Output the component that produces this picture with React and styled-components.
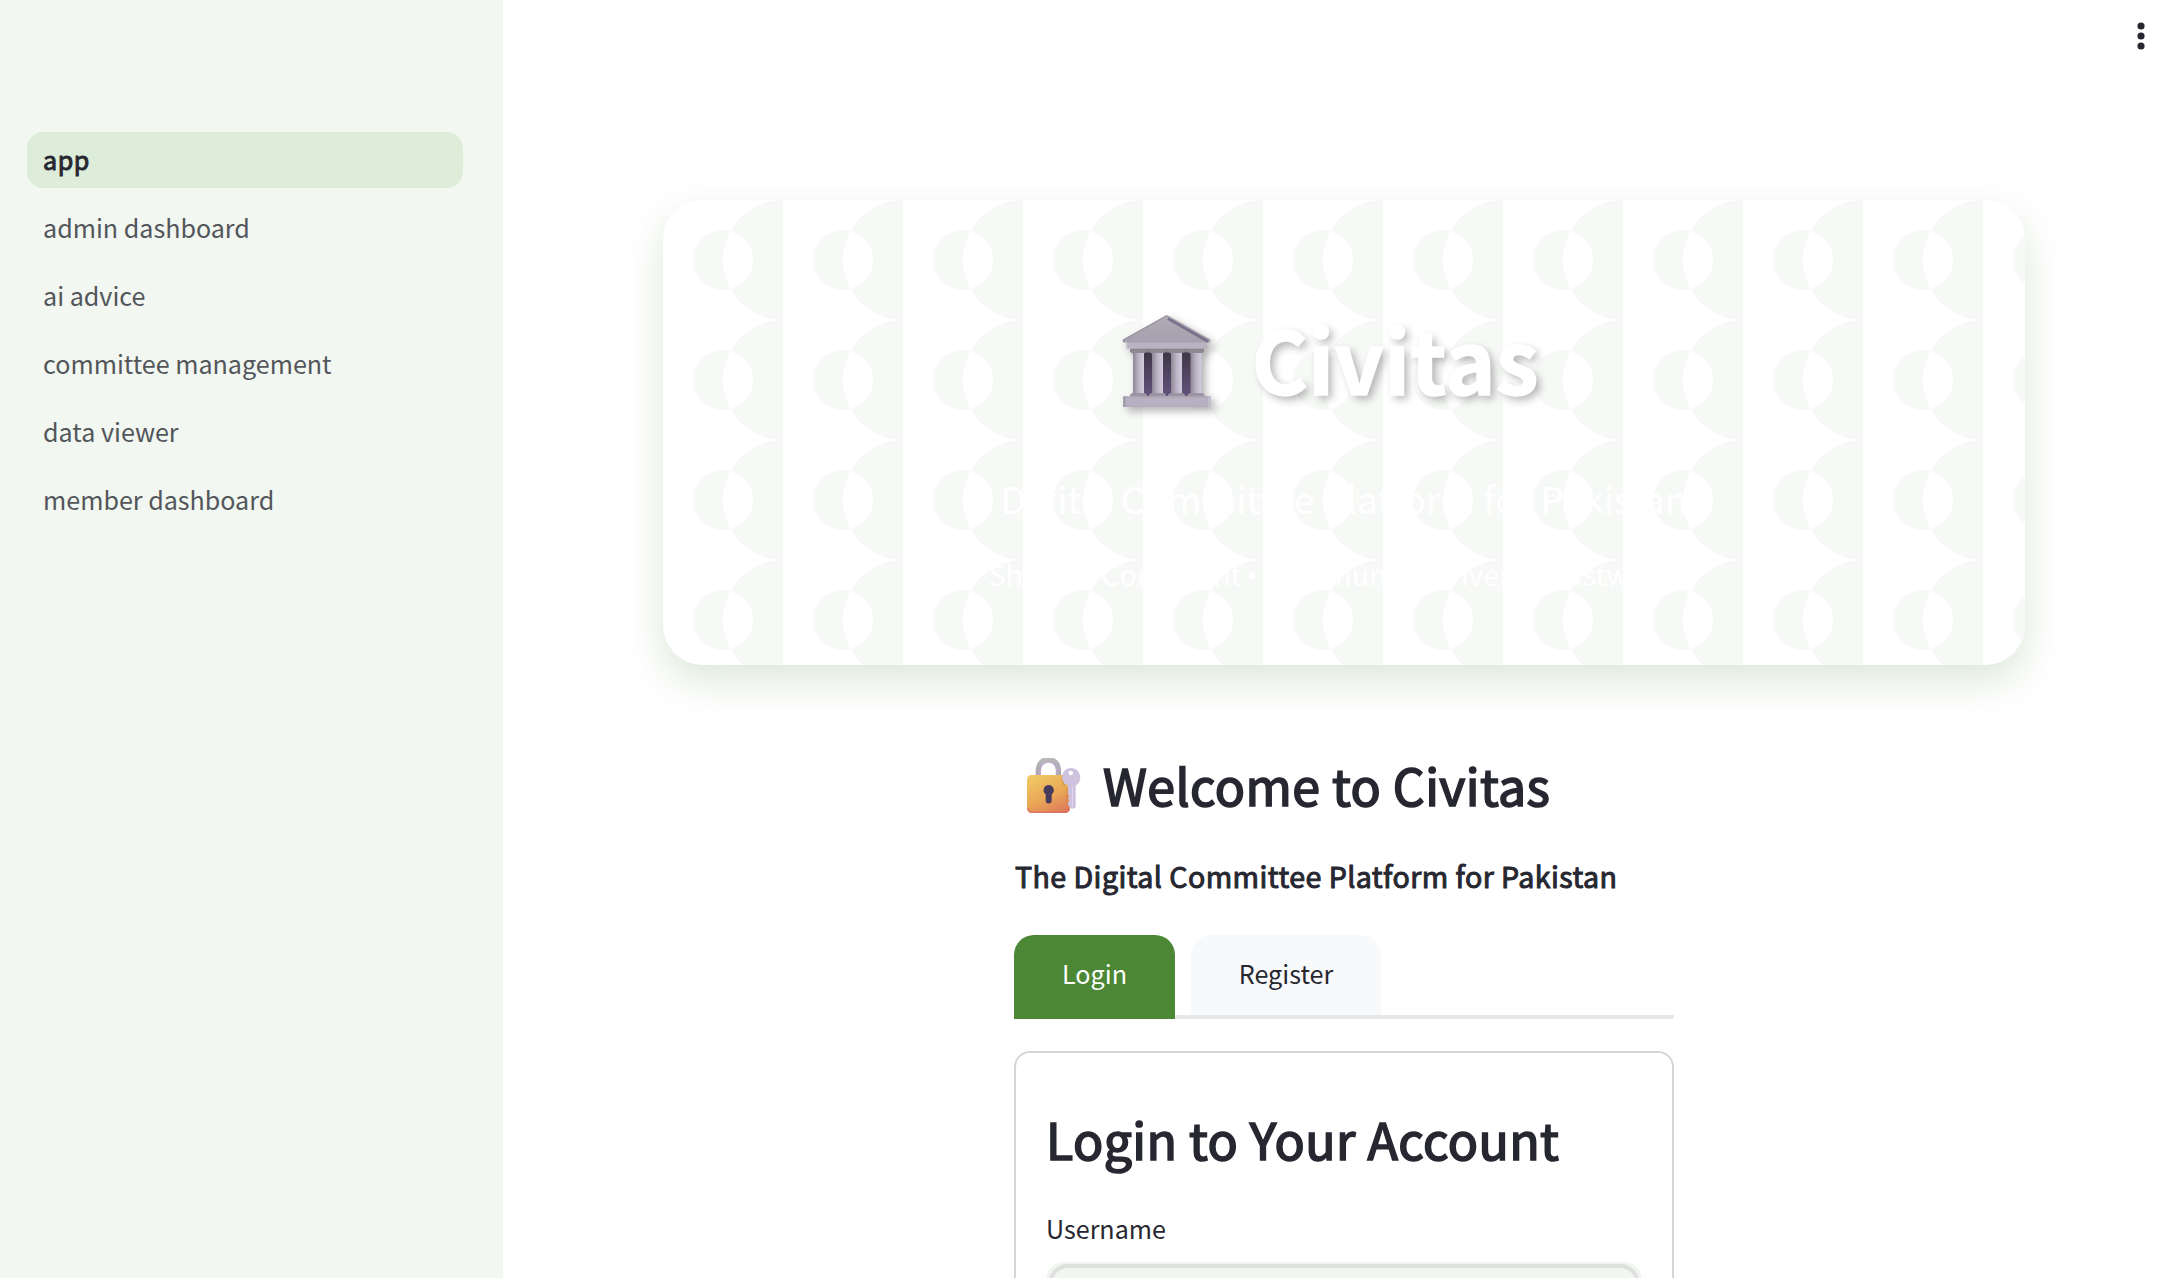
import React from "react";
import styled, { createGlobalStyle, css } from "styled-components";

const GlobalStyle = createGlobalStyle`
  * { box-sizing: border-box; }
  html, body { margin: 0; background: #ffffff; overflow: hidden; }
  body {
    font-family: "Source Sans Pro", "Noto Sans CJK SC", sans-serif;
    color: #262730;
    -webkit-font-smoothing: antialiased;
  }
  h1, h2, h3, p { margin: 0; }
`;

const Page = styled.div`
  display: flex;
  height: 1278px;
  overflow: hidden;
`;

const Sidebar = styled.nav`
  flex: 0 0 503px;
  padding: 132px 40px 0 27px;
  background: #f2f7f1;
  display: flex;
  flex-direction: column;
  gap: 12px;
`;

const NavLink = styled.a`
  display: flex;
  align-items: center;
  height: 56px;
  padding: 0 16px 2px;
  border-radius: 16px;
  font-size: 25.1px;
  line-height: 40px;
  color: #53565b;
  ${(p) =>
    p.$active &&
    css`
      background: #ddedda;
      color: #262730;
      -webkit-text-stroke: 0.9px #262730;
      letter-spacing: 0.5px;
    `}
`;

const Main = styled.main`
  flex: 1;
  min-width: 0;
  display: flex;
  flex-direction: column;
`;

const Toolbar = styled.header`
  flex: 0 0 120px;
  display: flex;
  justify-content: flex-end;
  align-items: flex-start;
  padding: 20px 23px 0 0;
`;

const Content = styled.div`
  padding: 80px 147px 0 160px;
  display: flex;
  flex-direction: column;
  align-items: center;
`;

const Hero = styled.section`
  position: relative;
  width: 100%;
  height: 465px;
  flex: none;
  padding-top: 100px;
  border-radius: 40px;
  background: #ffffff;
  box-shadow: 0 16px 38px rgba(74, 135, 52, 0.19);
  display: flex;
  flex-direction: column;
  align-items: center;
  color: #ffffff;
`;

const HeroPattern = styled.svg`
  position: absolute;
  inset: 0;
  width: 100%;
  height: 100%;
  border-radius: 40px;
`;

const HeroTitle = styled.h1`
  position: relative;
  display: flex;
  align-items: center;
  gap: 40px;
  height: 116px;
  padding-right: 26px;
  font-size: 86.4px;
  font-weight: 700;
  line-height: 116px;
  -webkit-text-stroke: 1.4px #ffffff;
  text-shadow: 4px 4px 8px rgba(0, 0, 0, 0.3);
  svg {
    margin-top: 5px;
    overflow: visible;
    filter: drop-shadow(4px 4px 4px rgba(0, 0, 0, 0.3));
  }
`;

const HeroLead = styled.p`
  position: relative;
  margin-top: 52px;
  font-size: 37.3px;
  line-height: 60px;
  white-space: nowrap;
`;

const HeroNote = styled.p`
  position: relative;
  margin-top: 21px;
  padding-left: 1px;
  font-size: 28.6px;
  line-height: 50px;
  white-space: nowrap;
`;

const Bullet = styled.span`
  display: inline-flex;
  justify-content: center;
  width: 9px;
  font-family: "Noto Sans", sans-serif;
  line-height: 1;
`;

const AuthColumn = styled.section`
  width: 660px;
  padding-top: 86px;
`;

const Title = styled.h2`
  display: flex;
  align-items: center;
  gap: 22px;
  padding-left: ${(p) => p.$indent || 0}px;
  font-size: 50px;
  font-weight: 400;
  -webkit-text-stroke: 1.7px #262730;
  letter-spacing: 0.42px;
  line-height: 66px;
  white-space: nowrap;
  svg {
    margin-top: 4px;
  }
`;

const Subtitle = styled.h3`
  margin-top: 39px;
  padding-left: 1px;
  font-size: 28.6px;
  font-weight: 400;
  -webkit-text-stroke: 1px #262730;
  letter-spacing: 0.44px;
  line-height: 40px;
  white-space: nowrap;
`;

const TabList = styled.div`
  display: flex;
  gap: 16px;
  height: 84px;
  margin-top: 39px;
  background: linear-gradient(#e7e8e9, #e7e8e9) bottom / 100% 4px no-repeat;
`;

const Tab = styled.button`
  border: 0;
  width: ${(p) => p.$width}px;
  height: ${(p) => (p.$active ? 84 : 80)}px;
  padding: 0 0 ${(p) => (p.$active ? 8 : 4)}px;
  border-radius: 20px 20px 0 0;
  background: ${(p) => (p.$active ? "#4b8734" : "#f8f9fb")};
  color: ${(p) => (p.$active ? "#ffffff" : "#262730")};
  font: 400 25.2px/40px "Source Sans Pro", "Noto Sans CJK SC", sans-serif;
`;

const Form = styled.form`
  height: 400px;
  margin-top: 32px;
  padding: 52px 30px 0;
  border: 2px solid #d4d5d7;
  border-radius: 16px;
`;

const Label = styled.label`
  display: block;
  margin-top: 37px;
  font-size: 25.1px;
  line-height: 40px;
`;

const InputShell = styled.div`
  margin-top: 14px;
  padding: 2px;
  border-radius: 18px;
  background: #f1f6f0;
`;

const Input = styled.input`
  display: block;
  width: 100%;
  height: 76px;
  border: 4px solid #dfe0df;
  border-radius: 20px;
  background: #f1f6f0;
  outline: none;
`;

function MenuDots() {
  return (
    <svg width="16" height="34" viewBox="0 0 16 34" fill="#262730" aria-label="Menu">
      <circle cx="8" cy="6" r="3.6" />
      <circle cx="8" cy="16" r="3.6" />
      <circle cx="8" cy="26" r="3.6" />
    </svg>
  );
}

function Temple() {
  const columns = [10, 29, 48, 67.5];
  return (
    <svg width="88" height="92" viewBox="0 0 88 92" aria-hidden="true">
      <defs>
        <linearGradient id="hall" x1="0" y1="0" x2="0" y2="1">
          <stop offset="0" stopColor="#3c3644" />
          <stop offset="1" stopColor="#62527c" />
        </linearGradient>
        <linearGradient id="column" x1="0" y1="0" x2="1" y2="0">
          <stop offset="0" stopColor="#8d8693" />
          <stop offset="0.5" stopColor="#bbb4c6" />
          <stop offset="1" stopColor="#d3ccdf" />
        </linearGradient>
        <linearGradient id="roof" x1="0" y1="0" x2="0" y2="1">
          <stop offset="0" stopColor="#b1abb5" />
          <stop offset="1" stopColor="#a6a0af" />
        </linearGradient>
        <linearGradient id="stone" x1="0" y1="0" x2="0" y2="1">
          <stop offset="0" stopColor="#aaa4b2" />
          <stop offset="0.3" stopColor="#b8b2c3" />
          <stop offset="1" stopColor="#b3adbf" />
        </linearGradient>
      </defs>
      <rect x="14" y="35" width="60" height="46" fill="url(#hall)" />
      <rect x="7" y="33.5" width="74" height="4" rx="1" fill="#88828d" />
      {columns.map((x) => (
        <g key={x}>
          <path d={`M${x - 2.5} 35h16v1.5l-3 2.5h-10.5l-2.5-2.5z`} fill="#8f8895" />
          <rect x={x} y="38" width="11" height="41" fill="url(#column)" />
          <path d={`M${x - 3} 81.5v-1.5q1-2 3-2h11q2 0 3 2v1.5z`} fill="#9b94a4" />
        </g>
      ))}
      <rect x="3" y="26" width="81" height="7.5" rx="1" fill="#b8b2c2" />
      <rect x="3" y="26" width="2" height="7.5" fill="#c7c1cf" />
      <path d="M44 0.5L87.5 25v2.5H0.5V25z" fill="url(#roof)" />
      <path d="M44 .5L.5 25v2.3" fill="none" stroke="#96909e" strokeWidth="1.4" />
      <path d="M45 3.5L85 26.5" stroke="#77718b" strokeWidth="2.6" />
      <path d="M44 .9L87 25" stroke="#a49daa" strokeWidth="1.4" />
      <rect x="0.3" y="81.3" width="87.5" height="10.7" rx="1" fill="url(#stone)" />
      <rect x="0.3" y="81.3" width="2" height="10.7" fill="#9c95a4" />
      <rect x="85.3" y="81.3" width="2.5" height="10.7" fill="#c5bfce" />
    </svg>
  );
}

function LockWithKey() {
  return (
    <svg width="54" height="56" viewBox="0 0 54 56" aria-hidden="true">
      <defs>
        <linearGradient id="lockBody" x1="0.25" y1="0" x2="0.75" y2="1">
          <stop offset="0" stopColor="#efc763" />
          <stop offset="0.55" stopColor="#eaa856" />
          <stop offset="1" stopColor="#df7a5a" />
        </linearGradient>
        <linearGradient id="shackle" x1="0" y1="0" x2="0" y2="1">
          <stop offset="0" stopColor="#b9b7b9" />
          <stop offset="1" stopColor="#aaa2b4" />
        </linearGradient>
      </defs>
      <path d="M11.2 20V11.5a10.2 10.2 0 0 1 20.4 0V20" fill="none" stroke="url(#shackle)" strokeWidth="5" />
      <path d="M13.3 18V12a8.1 8.1 0 0 1 16.2 0v6" fill="none" stroke="#bda9d0" strokeWidth="1.5" />
      <rect x="0" y="17" width="43" height="38" rx="4.5" fill="url(#lockBody)" />
      <path d="M1 50q1 4.4 5 4.4h31q4 0 5.3-4" fill="none" stroke="#d7735f" strokeWidth="1.2" />
      <path d="M21.7 27a5.2 5.2 0 0 1 3 9.4v6.2a3 3 0 0 1-6 0v-6.2a5.2 5.2 0 0 1 3-9.4z" fill="#473c5e" />
      <path d="M38 28q-4-5-2-11 3-6 8-6M40 30v16" fill="none" stroke="#c8843f" strokeWidth="1.5" opacity="0.5" />
      <path
        fillRule="evenodd"
        d="M44 10c5 0 9.3 4 9.3 9.4 0 3.8-2 6.6-4.6 8.2v20.4q0 2.5-2.5 2.5h-1.4q-1 0-1.6-1l-2.2-2.5v-3l1.6-1.6-1.8-2 1.8-1.8-1.6-1.8v-9.2c-3.5-1.6-5.9-4.4-5.9-8.2C35.1 14 39 10 44 10zM43.8 12.7a2.2 2.2 0 1 0 0 4.5 2.2 2.2 0 0 0 0-4.5z"
        fill="#cdc3de"
      />
      <path d="M45.5 29v20" stroke="#ded6ea" strokeWidth="1.2" />
    </svg>
  );
}

const pages = ["app", "admin dashboard", "ai advice", "committee management", "data viewer", "member dashboard"];

export default function App() {
  return (
    <>
      <GlobalStyle />
      <Page>
        <Sidebar>
          {pages.map((name, i) => (
            <NavLink key={name} $active={i === 0}>
              {name}
            </NavLink>
          ))}
        </Sidebar>
        <Main>
          <Toolbar>
            <MenuDots />
          </Toolbar>
          <Content>
            <Hero>
              <HeroPattern aria-hidden="true">
                <defs>
                  <pattern id="crescents" width="120" height="120" patternUnits="userSpaceOnUse">
                    <path
                      fill="#f7f9f7"
                      fillRule="evenodd"
                      d="M120 0A60 60 0 0 0 120 120ZM60 30A30 30 0 1 0 60 90A30 30 0 1 0 60 30Z"
                    />
                  </pattern>
                </defs>
                <rect width="100%" height="100%" fill="url(#crescents)" />
              </HeroPattern>
              <HeroTitle>
                <Temple />
                <span>Civitas</span>
              </HeroTitle>
              <HeroLead>Digital Committee Platform for Pakistan</HeroLead>
              <HeroNote>
                Shariah-Compliant <Bullet>•</Bullet> Community-Driven <Bullet>•</Bullet> Trustworthy
              </HeroNote>
            </Hero>
            <AuthColumn>
              <Title as="h1" $indent={13}>
                <LockWithKey />
                <span>Welcome to Civitas</span>
              </Title>
              <Subtitle>The Digital Committee Platform for Pakistan</Subtitle>
              <TabList>
                <Tab $active $width={161}>Login</Tab>
                <Tab $width={190}>Register</Tab>
              </TabList>
              <Form>
                <Title>Login to Your Account</Title>
                <Label>Username</Label>
                <InputShell>
                  <Input />
                </InputShell>
              </Form>
            </AuthColumn>
          </Content>
        </Main>
      </Page>
    </>
  );
}
